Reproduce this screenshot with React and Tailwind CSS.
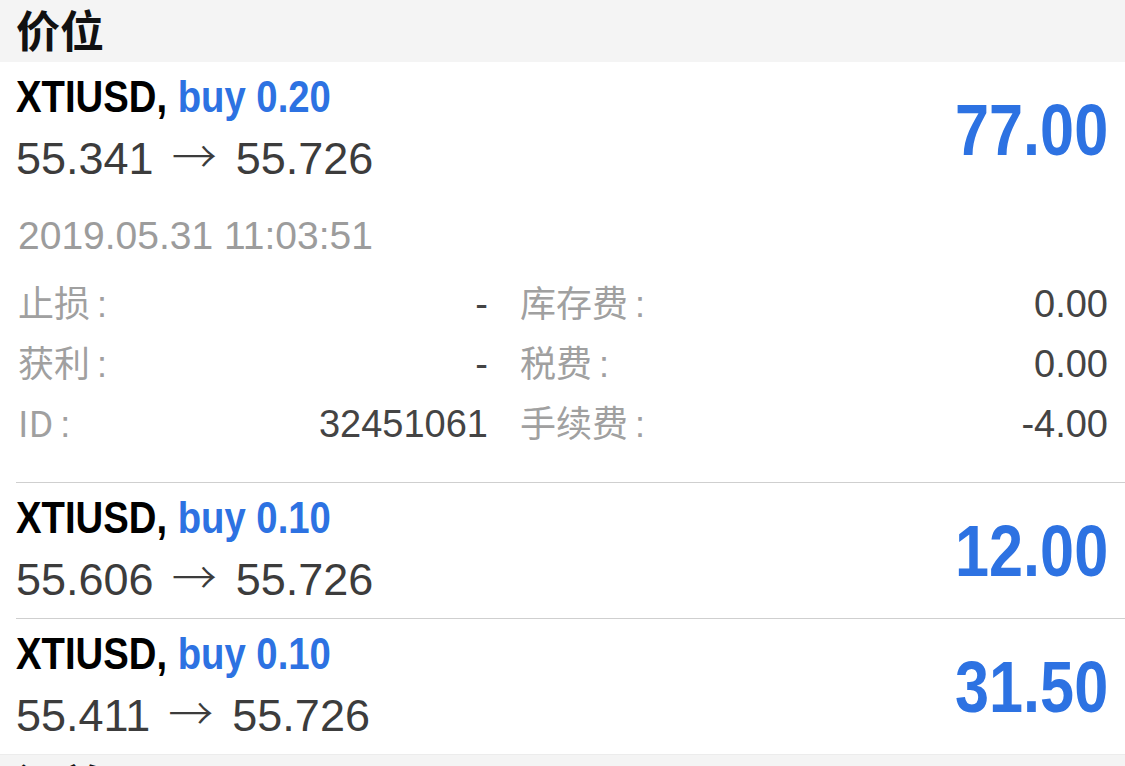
import React from "react";

const positions = [
  {
    id: 1,
    symbol: "XTIUSD",
    side: "buy 0.20",
    open: "55.341",
    current: "55.726",
    profit: "77.00",
    expanded: true,
    time: "2019.05.31 11:03:51",
    details: [
      ["止损", "-", "库存费", "0.00"],
      ["获利", "-", "税费", "0.00"],
      ["ID", "32451061", "手续费", "-4.00"],
    ],
  },
  { id: 2, symbol: "XTIUSD", side: "buy 0.10", open: "55.606", current: "55.726", profit: "12.00" },
  { id: 3, symbol: "XTIUSD", side: "buy 0.10", open: "55.411", current: "55.726", profit: "31.50" },
];

// no condensed face installed, so squeeze Liberation Sans Bold
const condensed = "font-['Liberation_Sans',sans-serif] font-bold inline-block whitespace-nowrap";

function SectionHeader({ title, clipped }) {
  return (
    <div
      className={`h-[62px] bg-[#f4f4f4] px-4 flex ${
        clipped ? "items-start pt-[2px]" : "items-center pb-[4px]"
      }`}
    >
      <span className="text-[44px] leading-[1.2] font-bold text-[#111] font-['Noto_Sans_CJK_SC',sans-serif]">
        {title}
      </span>
    </div>
  );
}

function Label({ text }) {
  return (
    <span className="text-[#a0a0a0] font-['Noto_Sans_CJK_SC',sans-serif] text-[36px] leading-none">
      {text}
      <span className="ml-[7px] font-['Liberation_Sans',sans-serif]">:</span>
    </span>
  );
}

function PositionRow({ item }) {
  return (
    <div className="bg-white">
      <div className="flex items-center justify-between pl-4 pr-[17px] pt-[6px]">
        <div className="flex flex-col">
          <div className="h-[58px] flex items-center">
            <span className={`${condensed} origin-left scale-x-[0.87] text-[44px] leading-none`}>
              <span className="text-black">{item.symbol}, </span>
              <span className="text-[#2d72e2]">{item.side}</span>
            </span>
          </div>
          <div className="h-[66px] text-[45px] leading-[66px] text-[#3c3c3c] font-['Liberation_Sans',sans-serif] whitespace-nowrap">
            {item.open}
            <span className="ml-[18px] mr-[19px] leading-none font-['Noto_Sans_CJK_SC',sans-serif] font-light">→</span>
            {item.current}
          </div>
        </div>
        <span className={`${condensed} origin-right scale-x-[0.85] text-[72px] leading-none text-[#2d72e2]`}>
          {item.profit}
        </span>
      </div>

      {item.expanded ? (
        <div className="pl-[18px] pr-[17px] pb-[28px] font-['Liberation_Sans',sans-serif]">
          <div className="mt-[22px] h-[44px] text-[39px] leading-[44px] text-[#9c9c9c]">{item.time}</div>
          <div className="mt-[16px] flex flex-col">
            {item.details.map((d) => (
              <div key={d[0]} className="h-[60px] grid grid-cols-[470px_1fr] gap-[32px] text-[38px] leading-[60px]">
                <div className="flex justify-between items-baseline">
                  <Label text={d[0]} />
                  <span className="text-[#444]">{d[1]}</span>
                </div>
                <div className="flex justify-between items-baseline">
                  <Label text={d[2]} />
                  <span className="text-[#444]">{d[3]}</span>
                </div>
              </div>
            ))}
          </div>
        </div>
      ) : (
        <div className="h-[5px]" />
      )}
    </div>
  );
}

export default function App() {
  return (
    <div className="w-[1125px] h-[766px] overflow-hidden bg-white">
      <SectionHeader title="价位" />
      {positions.map((p, i) => (
        <div key={p.id}>
          <PositionRow item={p} />
          {i < positions.length - 1 && <div className="ml-4 h-px bg-[#cfcfcf]" />}
        </div>
      ))}
      <div className="border-t border-[#ececec]">
        <SectionHeader title="订单" clipped />
      </div>
    </div>
  );
}
